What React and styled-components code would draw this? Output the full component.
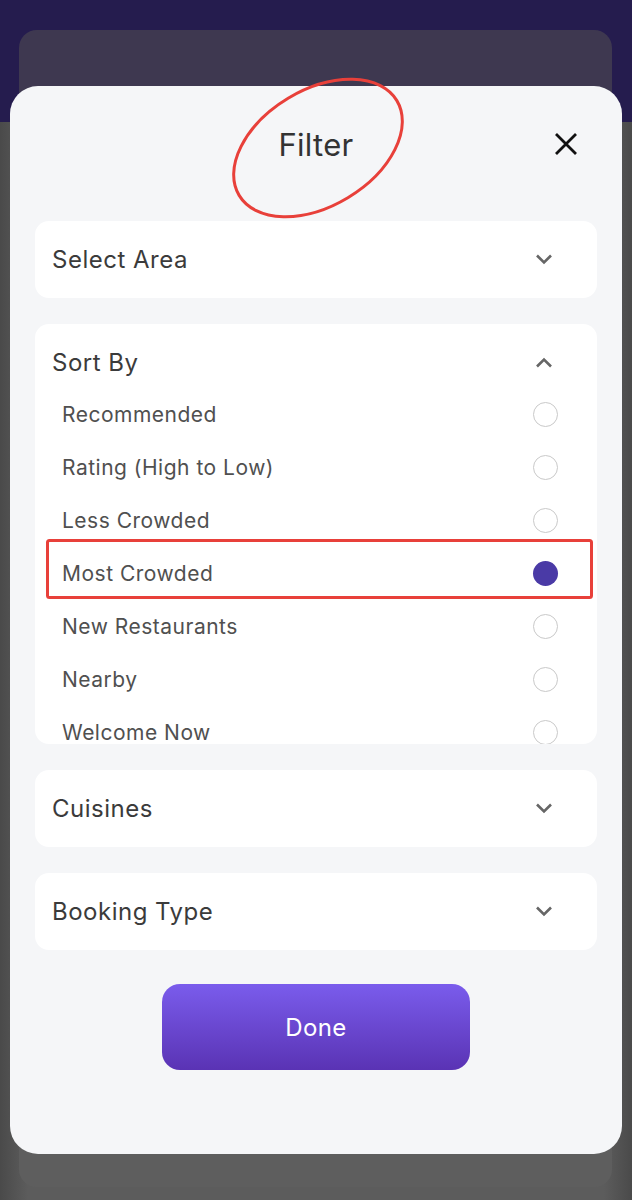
import styled, { createGlobalStyle } from "styled-components";

const GlobalStyle = createGlobalStyle`
  body {
    margin: 0;
    font-family: Inter, "Noto Sans", "Liberation Sans", sans-serif;
  }
`;

// dimmed app page behind the sheet
const Page = styled.div`
  position: relative;
  width: 632px;
  height: 1200px;
  overflow: hidden;
  box-sizing: border-box;
  padding: 30px 20px 13px 19px;
  background:
    linear-gradient(to bottom, #251c4e 0 122px, transparent 122px),
    linear-gradient(to right, #4a4a4a 0, #5c5c5c 28px, #5c5c5c 604px, #4a4a4a 632px);
`;

const BackSheet = styled.div`
  height: 100%;
  border-radius: 18px;
  background: linear-gradient(to bottom, #3e3850 0 92px, #5e5e5e 92px);
`;

const Sheet = styled.div`
  position: absolute;
  left: 10px;
  top: 86px;
  width: 612px;
  height: 1068px;
  box-sizing: border-box;
  padding: 0 25px;
  border-radius: 28px;
  background: #f5f6f8;
  display: flex;
  flex-direction: column;
`;

const SheetHeader = styled.div`
  height: 116px;
  display: grid;
  grid-template-columns: 1fr auto 1fr;
  align-items: center;
`;

const Title = styled.h1`
  grid-column: 2;
  margin: 0;
  font-size: 31px;
  font-weight: 400;
  color: #333;
  letter-spacing: 0.3px;
`;

const CloseButton = styled.button`
  grid-column: 3;
  justify-self: end;
  margin-right: 19px;
  padding: 0;
  border: 0;
  background: none;
  display: flex;
`;

const Sections = styled.div`
  margin-top: 19px;
  display: flex;
  flex-direction: column;
  gap: 26px;
`;

const Card = styled.div`
  background: #fff;
  border-radius: 14px;
  overflow: hidden;
  height: ${(p) => (p.$open ? "420px" : "77px")};
`;

const CardHead = styled.div`
  display: flex;
  align-items: center;
  justify-content: space-between;
  height: ${(p) => (p.$open ? "52px" : "77px")};
  margin-top: ${(p) => (p.$open ? "12px" : "0")};
  padding: 0 44px 0 17px;
  font-size: 24px;
  letter-spacing: 0.5px;
  color: #3b3b3b;
`;

const Option = styled.div`
  display: flex;
  align-items: center;
  justify-content: space-between;
  height: 53px;
  padding: 0 39px 0 27px;
  font-size: 21px;
  letter-spacing: 0.5px;
  color: #505050;
`;

const Radio = styled.span`
  width: 25px;
  height: 25px;
  box-sizing: border-box;
  border-radius: 50%;
  border: ${(p) => (p.$checked ? "none" : "1.6px solid #c9c9c9")};
  background: ${(p) => (p.$checked ? "#4a3aa6" : "#fff")};
`;

const DoneButton = styled.button`
  margin: 34px auto 0;
  width: 308px;
  height: 86px;
  border: 0;
  border-radius: 18px;
  background: linear-gradient(to bottom, #7a5cec, #5a33b4);
  color: #fff;
  font-family: inherit;
  font-size: 24px;
  letter-spacing: 0.4px;
`;

// red markup drawn on top of the screenshot
const Markup = styled.svg`
  position: absolute;
  left: 0;
  top: 0;
  pointer-events: none;
`;

const Chevron = ({ up }) => (
  <svg width="18" height="11" viewBox="0 0 18 11">
    <path
      d={up ? "M2 9.5 L9 2.5 L16 9.5" : "M2 1.5 L9 8.5 L16 1.5"}
      fill="none"
      stroke="#666"
      strokeWidth="2.6"
    />
  </svg>
);

const sortOptions = [
  "Recommended",
  "Rating (High to Low)",
  "Less Crowded",
  "Most Crowded",
  "New Restaurants",
  "Nearby",
  "Welcome Now",
];

export default function App() {
  return (
    <>
      <GlobalStyle />
      <Page>
        <BackSheet />
        <Sheet>
          <SheetHeader>
            <Title>Filter</Title>
            <CloseButton>
              <svg width="24" height="24" viewBox="0 0 24 24">
                <path d="M2 2 L22 22 M22 2 L2 22" stroke="#111" strokeWidth="2.8" />
              </svg>
            </CloseButton>
          </SheetHeader>
          <Sections>
            <Card>
              <CardHead>
                Select Area
                <Chevron />
              </CardHead>
            </Card>
            <Card $open>
              <CardHead $open>
                Sort By
                <Chevron up />
              </CardHead>
              {sortOptions.map((o) => (
                <Option key={o}>
                  {o}
                  <Radio $checked={o === "Most Crowded"} />
                </Option>
              ))}
            </Card>
            <Card>
              <CardHead>
                Cuisines
                <Chevron />
              </CardHead>
            </Card>
            <Card>
              <CardHead>
                Booking Type
                <Chevron />
              </CardHead>
            </Card>
          </Sections>
          <DoneButton>Done</DoneButton>
        </Sheet>
        <Markup width="632" height="1200">
          <ellipse
            cx="318"
            cy="148"
            rx="92"
            ry="58"
            transform="rotate(-31 318 148)"
            fill="none"
            stroke="#e8403a"
            strokeWidth="3"
          />
          <rect x="47.5" y="540.5" width="544" height="57" rx="2" fill="none" stroke="#e8403a" strokeWidth="3" />
        </Markup>
      </Page>
    </>
  );
}
